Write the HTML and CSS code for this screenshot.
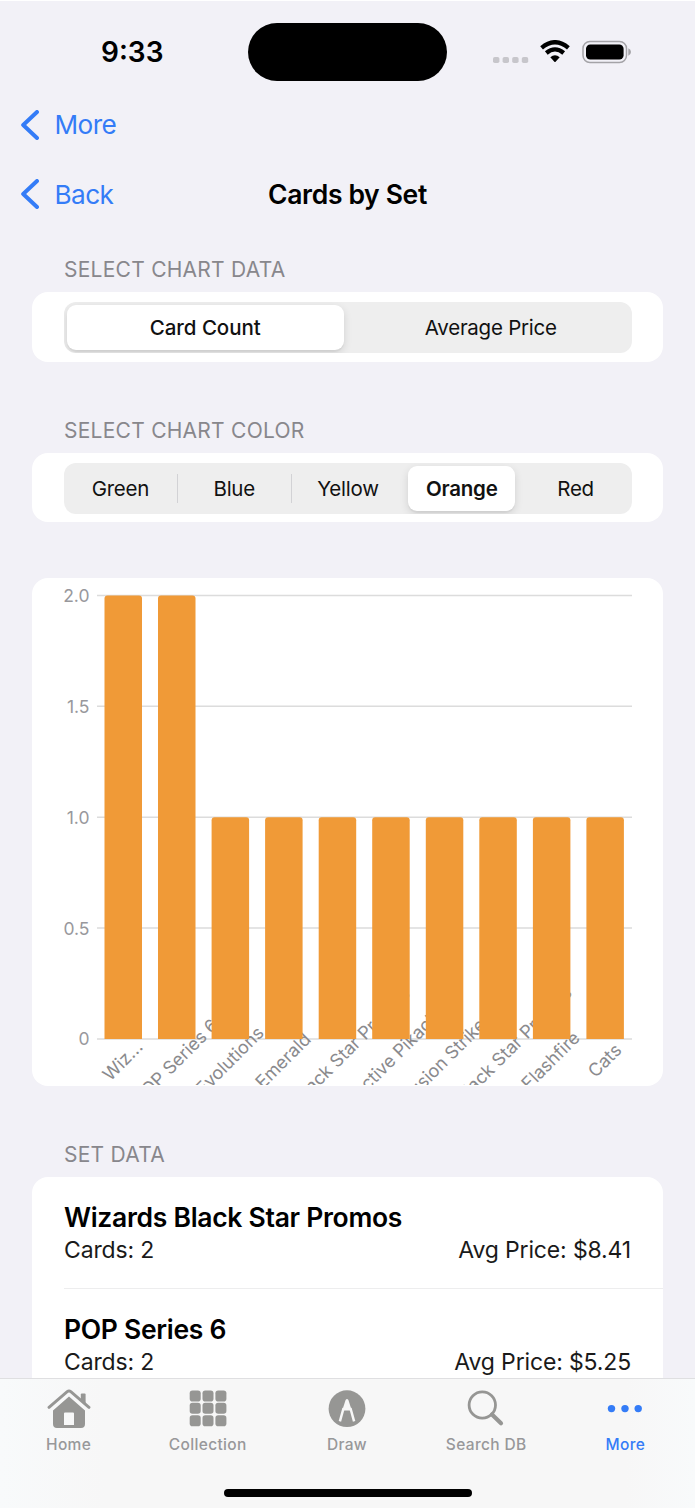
FILE: index.html
```html
<!DOCTYPE html>
<html lang="en">
<head>
    <meta charset="UTF-8">
    <meta name="viewport" content="width=device-width, initial-scale=1.0">
    <title>Cards by Set</title>
    <link rel="stylesheet" href="styles.css">
</head>
<body>
    <div class="screen">
        <header class="status-bar">
            <span class="time">9:33</span>
            <div class="island"></div>
            <div class="status-icons">
                <svg class="signal" width="36" height="6" viewBox="0 0 36 6">
                    <rect x="0" y="0" width="6.4" height="6" rx="1.8"/>
                    <rect x="9.6" y="0" width="6.4" height="6" rx="1.8"/>
                    <rect x="19.2" y="0" width="6.4" height="6" rx="1.8"/>
                    <rect x="28.8" y="0" width="6.4" height="6" rx="1.8"/>
                </svg>
                <svg class="wifi" width="30" height="23" viewBox="0 0 30 23">
                    <path d="M1.6 7.8 Q15 -3.4 28.4 7.8" fill="none" stroke="#000" stroke-width="4.3"/>
                    <path d="M6.3 13 Q15 5.8 23.7 13" fill="none" stroke="#000" stroke-width="4.3"/>
                    <path d="M10.3 17.2 Q15 13.4 19.7 17.2 L15.6 21.8 Q15 22.4 14.4 21.8 Z"/>
                </svg>
                <svg class="battery" width="50" height="24" viewBox="0 0 50 24">
                    <rect x="1" y="1.5" width="43.5" height="21" rx="7" fill="none" stroke="#a4a3a7" stroke-width="1.5"/>
                    <rect x="4" y="4.4" width="37.6" height="15.2" rx="4.3"/>
                    <path d="M46.3 8.2 Q49 9.4 49 12 Q49 14.6 46.3 15.8 Z" fill="#a4a3a7"/>
                </svg>
            </div>
        </header>

        <nav class="nav-row">
            <a class="back" href="#">
                <svg width="18" height="30" viewBox="0 0 18 30"><path d="M16 2 L2.2 15 L16 28"/></svg>
                <span>More</span>
            </a>
        </nav>
        <nav class="nav-row">
            <a class="back" href="#">
                <svg width="18" height="30" viewBox="0 0 18 30"><path d="M16 2 L2.2 15 L16 28"/></svg>
                <span>Back</span>
            </a>
            <h1>Cards by Set</h1>
        </nav>

        <main>
            <section>
                <h2>SELECT CHART DATA</h2>
                <div class="card picker-card">
                    <div class="picker two">
                        <button class="selected">Card Count</button>
                        <button>Average Price</button>
                    </div>
                </div>
            </section>

            <section>
                <h2>SELECT CHART COLOR</h2>
                <div class="card picker-card">
                    <div class="picker five">
                        <button>Green</button>
                        <button class="divided">Blue</button>
                        <button class="divided">Yellow</button>
                        <button class="selected">Orange</button>
                        <button>Red</button>
                    </div>
                </div>
            </section>

            <section class="card chart-card">
                <svg class="chart" width="631" height="507" viewBox="0 0 631 507">
                    <g class="grid">
                        <path d="M65 17.5H600 M65 128.3H600 M65 239.2H600 M65 350H600 M65 461H600"/>
                    </g>
                    <g class="axis">
                        <text x="57.5" y="23.7">2.0</text>
                        <text x="57.5" y="134.7">1.5</text>
                        <text x="57.5" y="245.7">1.0</text>
                        <text x="57.5" y="356.5">0.5</text>
                        <text x="57.5" y="467.3">0</text>
                    </g>
                    <g class="labels">
                        <text transform="translate(95 487) rotate(-45)">Wiz...</text>
                        <text transform="translate(148 488) rotate(-45)">POP Series 6</text>
                        <text transform="translate(202 487) rotate(-45)">Evolutions</text>
                        <text transform="translate(255.5 487) rotate(-45)">Emerald</text>
                        <text transform="translate(303 493) rotate(-45)">SWSH Black Star Promos</text>
                        <text transform="translate(362 487) rotate(-45)">Detective Pikachu</text>
                        <text transform="translate(416 487) rotate(-45)">Fusion Strike</text>
                        <text transform="translate(465 492) rotate(-45)">SWSH Black Star Promos</text>
                        <text transform="translate(523 487) rotate(-45)">Flashfire</text>
                        <text transform="translate(577 487) rotate(-45)">Cats</text>
                    </g>
                    <g class="bars">
                        <path d="M72.5 461V20.5q0-3 3-3h31.5q3 0 3 3V461z"/>
                        <path d="M126 461V20.5q0-3 3-3h31.5q3 0 3 3V461z"/>
                        <path d="M179.6 461V242.2q0-3 3-3h31.5q3 0 3 3V461z"/>
                        <path d="M233.1 461V242.2q0-3 3-3h31.5q3 0 3 3V461z"/>
                        <path d="M286.7 461V242.2q0-3 3-3h31.5q3 0 3 3V461z"/>
                        <path d="M340.2 461V242.2q0-3 3-3h31.5q3 0 3 3V461z"/>
                        <path d="M393.8 461V242.2q0-3 3-3h31.5q3 0 3 3V461z"/>
                        <path d="M447.3 461V242.2q0-3 3-3h31.5q3 0 3 3V461z"/>
                        <path d="M500.9 461V242.2q0-3 3-3h31.5q3 0 3 3V461z"/>
                        <path d="M554.4 461V242.2q0-3 3-3h31.5q3 0 3 3V461z"/>
                    </g>
                </svg>
            </section>

            <section>
                <h2>SET DATA</h2>
                <div class="card set-list">
                    <article class="set">
                        <h3>Wizards Black Star Promos</h3>
                        <p><span>Cards: 2</span><span>Avg Price: $8.41</span></p>
                    </article>
                    <article class="set">
                        <h3>POP Series 6</h3>
                        <p><span>Cards: 2</span><span>Avg Price: $5.25</span></p>
                    </article>
                </div>
            </section>
        </main>

        <footer class="tab-bar">
            <div class="tabs">
                <a class="tab" href="#">
                    <svg width="44" height="40" viewBox="0 0 44 40">
                        <path d="M2 18.4 L20.2 2.6 Q22 1.2 23.8 2.6 L42 18.4" fill="none" stroke="#969694" stroke-width="2.9" stroke-linecap="round"/>
                        <path d="M33.8 11.5 V5.5 q0-1 1-1 h2.8 q1 0 1 1 V15.6 Z"/>
                        <path fill-rule="evenodd" d="M22 7.6 L38 21.4 V35 q0 4-4 4 H10 q-4 0-4-4 V21.4 Z M17 24.6 V36 H27 V24.6 q0-1-1-1 H18 q-1 0-1 1 Z"/>
                    </svg>
                    <span>Home</span>
                </a>
                <a class="tab" href="#">
                    <svg width="44" height="40" viewBox="0 0 44 40">
                        <rect x="3.7" y="1.5" width="11" height="11" rx="2.8"/><rect x="16.5" y="1.5" width="11" height="11" rx="2.8"/><rect x="29.4" y="1.5" width="11" height="11" rx="2.8"/>
                        <rect x="3.7" y="13.8" width="11" height="11" rx="2.8"/><rect x="16.5" y="13.8" width="11" height="11" rx="2.8"/><rect x="29.4" y="13.8" width="11" height="11" rx="2.8"/>
                        <rect x="3.7" y="26.2" width="11" height="11" rx="2.8"/><rect x="16.5" y="26.2" width="11" height="11" rx="2.8"/><rect x="29.4" y="26.2" width="11" height="11" rx="2.8"/>
                    </svg>
                    <span>Collection</span>
                </a>
                <a class="tab" href="#">
                    <svg width="44" height="40" viewBox="0 0 44 40">
                        <circle cx="22" cy="19.7" r="18.4"/>
                        <path class="cut" d="M20.6 11 Q22 9 23.4 11 L26.8 21.5 H17.2 Z"/>
                        <path d="M14.9 32.3 L18.6 19 M29.1 32.3 L25.4 19" stroke="#f7f7f7" stroke-width="2.5" fill="none"/>
                    </svg>
                    <span>Draw</span>
                </a>
                <a class="tab" href="#">
                    <svg width="44" height="40" viewBox="0 0 44 40">
                        <g fill="none" stroke="#969694" stroke-linecap="round">
                            <circle cx="18.3" cy="16" r="13.2" stroke-width="2.8"/>
                            <path d="M28 25.5 L37 34.3" stroke-width="4.2"/>
                        </g>
                    </svg>
                    <span>Search DB</span>
                </a>
                <a class="tab active" href="#">
                    <svg width="44" height="40" viewBox="0 0 44 40">
                        <circle cx="8.5" cy="19.6" r="3.7"/>
                        <circle cx="22" cy="19.6" r="3.7"/>
                        <circle cx="35.2" cy="19.6" r="3.7"/>
                    </svg>
                    <span>More</span>
                </a>
            </div>
            <div class="home-indicator"></div>
        </footer>
    </div>
</body>
</html>
```
FILE: styles.css
```css
* {
    box-sizing: border-box;
}
body {
    margin: 0;
    background: #fff;
    color: #000;
    font-family: Inter, "Liberation Sans", sans-serif;
}
.screen {
    display: flex;
    flex-direction: column;
    width: 695px;
    height: 1507px;
    margin-top: 1px;
    background: #f2f1f7;
    overflow: hidden;
}
h1, h2, h3, p {
    margin: 0;
}
a {
    color: #347cf7;
    text-decoration: none;
}

/* status bar */
.status-bar {
    display: grid;
    grid-template-columns: 248px 199px 1fr;
    height: 89px;
    flex-shrink: 0;
}
.time {
    padding: 34px 0 0 101px;
    font-size: 28px;
    font-weight: 600;
    line-height: 34px;
}
.island {
    height: 58px;
    margin-top: 22px;
    border-radius: 29px;
    background: #000;
}
.status-icons {
    display: flex;
    padding: 39px 0 0 46px;
}
.signal {
    margin-top: 17px;
    fill: #c7c6cb;
}
.wifi {
    margin-left: 10.5px;
}
.battery {
    margin-left: 12px;
}

/* navigation */
.nav-row {
    display: grid;
    grid-template-columns: 1fr auto 1fr;
    align-items: center;
    height: 69.5px;
    flex-shrink: 0;
}
.back {
    display: flex;
    align-items: center;
    gap: 16px;
    padding-left: 20.5px;
    font-size: 26.2px;
    letter-spacing: -0.6px;
}
.back path {
    fill: none;
    stroke: #347cf7;
    stroke-width: 4;
    stroke-linecap: round;
    stroke-linejoin: round;
}
h1 {
    font-size: 26.5px;
    font-weight: 600;
    letter-spacing: -0.35px;
}

/* form sections */
main {
    flex: 1;
    min-height: 0;
    padding: 26px 32px 0;
    overflow: hidden;
}
h2 {
    height: 37px;
    padding: 1px 32px 0;
    color: #88878c;
    font-size: 21px;
    font-weight: 400;
    line-height: 28px;
    letter-spacing: 0.25px;
}
.card {
    border-radius: 16px;
    background: #fff;
    overflow: hidden;
}
.picker-card {
    height: 69.5px;
    margin-bottom: 54px;
    padding: 10px 31px 0 32px;
}
.picker {
    display: grid;
    height: 51px;
    padding: 3px;
    border-radius: 12px;
    background: #eee;
    overflow: hidden;
}
.two {
    grid-template-columns: 1fr 1fr;
    column-gap: 9px;
}
.five {
    grid-template-columns: repeat(5, 1fr);
    column-gap: 7px;
}
.picker button {
    position: relative;
    padding: 0;
    border: none;
    border-radius: 9px;
    background: none;
    color: #111;
    font-family: inherit;
    font-size: 20.5px;
    letter-spacing: -0.25px;
}
.picker .selected {
    background: #fff;
    font-weight: 500;
    letter-spacing: -0.05px;
    box-shadow: 0 3px 8px rgba(0, 0, 0, 0.12), 0 2px 1px rgba(0, 0, 0, 0.04);
}
.five .selected {
    font-weight: 600;
    letter-spacing: -0.2px;
}
.divided::before {
    content: "";
    position: absolute;
    top: 8px;
    left: -4px;
    width: 1px;
    height: 29px;
    background: #d2d2d5;
}

/* chart */
.chart-card {
    height: 508px;
    margin: 56px 0 54px;
}
.chart {
    display: block;
}
.grid path {
    fill: none;
    stroke: #dcdcdc;
    stroke-width: 1.4;
}
.bars path {
    fill: #f09a37;
}
.axis text {
    fill: #98989c;
    font-size: 17.5px;
    text-anchor: end;
}
.labels text {
    fill: #8a8a8d;
    font-size: 18px;
    text-anchor: middle;
}

/* set list */
.set-list {
    height: 400px;
}
.set {
    height: 111.5px;
    margin-left: 32px;
    padding: 23px 32px 0 0;
    border-bottom: 1.5px solid #ededee;
}
h3 {
    font-size: 26.5px;
    font-weight: 600;
    line-height: 34px;
    letter-spacing: -0.3px;
}
.set p {
    display: flex;
    justify-content: space-between;
    color: #1a1a1a;
    font-size: 23px;
    line-height: 33px;
    letter-spacing: -0.15px;
}

/* tab bar */
.tab-bar {
    height: 130px;
    flex-shrink: 0;
    border-top: 1.5px solid #dfdfe1;
    background: linear-gradient(to right, #f8fafb, #f7f7f7 15%, #f7f7f7 90%, #f8fafb);
}
.tabs {
    display: grid;
    grid-template-columns: repeat(5, 1fr);
    height: 110px;
    padding-top: 10px;
    margin-left: -1px;
}
.tab {
    display: flex;
    flex-direction: column;
    align-items: center;
    color: #98989a;
    font-size: 15.5px;
    font-weight: 500;
    letter-spacing: 0.35px;
}
.tab svg {
    fill: #969694;
}
.tab span {
    margin-top: 6px;
}
.tab .cut {
    fill: #f7f7f7;
}
.tab.active {
    color: #347cf7;
}
.active svg {
    fill: #347cf7;
}
.home-indicator {
    width: 248px;
    height: 8px;
    margin: 0 auto;
    border-radius: 4px;
    background: #000;
}
```
